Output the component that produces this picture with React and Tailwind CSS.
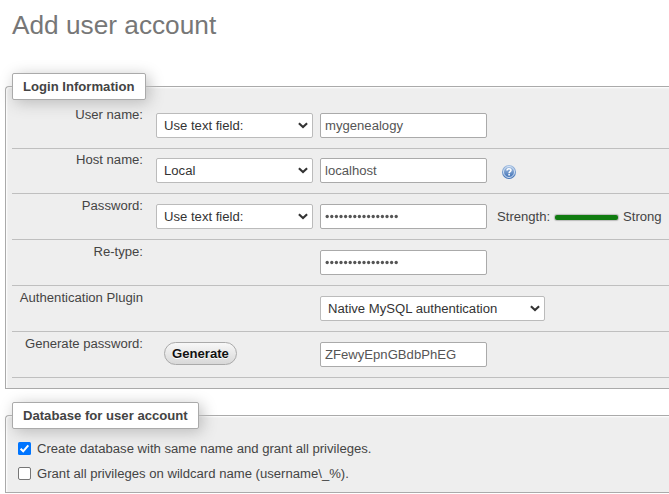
import React from 'react';

function Chevron() {
  return (
    <svg width="10" height="7" viewBox="0 0 10 7" className="shrink-0" fill="none" stroke="#333" strokeWidth="2.1">
      <path d="M0.9 1.2 L5 5 L9.1 1.2" />
    </svg>
  );
}

function Select({ className, children }) {
  return (
    <div className={`flex h-[25px] shrink-0 items-center justify-between rounded-[2px] border border-[#bbb] bg-white pr-[4px] pl-[7px] text-[#333] ${className}`}>
      <span className="whitespace-nowrap">{children}</span>
      <Chevron />
    </div>
  );
}

function Field({ children }) {
  return (
    <div className="ml-[7px] flex h-[25px] w-[167px] shrink-0 items-center rounded-[2px] border border-[#aaa] bg-white pl-[4px] whitespace-nowrap text-[#555]">
      {children}
    </div>
  );
}

function Dots() {
  return (
    <svg width="74" height="5" viewBox="0 0 74 5" fill="#555">
      {Array.from({ length: 16 }, (_, i) => (
        <circle key={i} cx={2.2 + i * 4.6} cy="2.5" r="1.65" />
      ))}
    </svg>
  );
}

function HelpIcon() {
  return (
    <svg width="14" height="14" viewBox="0 0 14 14" className="mb-[4px] ml-[15px] shrink-0">
      <defs>
        <linearGradient id="help" x1="0" y1="0" x2="0" y2="1">
          <stop offset="0" stopColor="#a5c0e2" />
          <stop offset="1" stopColor="#3f70b5" />
        </linearGradient>
      </defs>
      <circle cx="7" cy="7" r="7" fill="url(#help)" />
      <circle cx="7" cy="7" r="5.5" fill="url(#help)" stroke="#dce9f7" strokeWidth="0.9" />
      <path d="M5 5.4 C5 3.1 9 3.1 9 5.3 C9 6.7 7.1 6.6 7.1 8.2" fill="none" stroke="#fff" strokeWidth="1.5" />
      <rect x="6.3" y="9" width="1.6" height="1.5" fill="#fff" />
    </svg>
  );
}

function Row({ label, height = 'h-[46px]', children }) {
  return (
    <div className={`flex items-end border-b border-[#bfbfbf] pb-[10px] ${height}`}>
      <div className="mr-[13px] mb-[15px] flex w-[131px] shrink-0 justify-end leading-4 whitespace-nowrap">{label}</div>
      {children}
    </div>
  );
}

function Panel({ title, legend, className, children }) {
  return (
    <section className={`ml-[5px] rounded-tl-[4px] border border-r-0 border-[#aaa] bg-[#eee] pl-[6px] shadow-[inset_1px_1px_2px_#fff] ${className}`}>
      <h2 className={`-mt-[14px] flex h-[27px] items-center rounded-[2px] border border-[#aaa] bg-white pl-[10px] font-bold whitespace-nowrap shadow-[3px_3px_15px_#bbb] ${legend}`}>
        {title}
      </h2>
      {children}
    </section>
  );
}

function Check({ checked, children }) {
  return (
    <div className="flex h-[25px] items-center pl-[6px]">
      {checked ? (
        <svg width="13" height="13" viewBox="0 0 13 13">
          <rect width="13" height="13" rx="1.5" fill="#0075ff" />
          <path d="M2.6 6.8 L5.2 9.3 L10.3 3.3" fill="none" stroke="#fff" strokeWidth="2" />
        </svg>
      ) : (
        <span className="size-[13px] rounded-[2px] border border-[#767676] bg-white" />
      )}
      <span className="ml-[6px] whitespace-nowrap">{children}</span>
    </div>
  );
}

export default function App() {
  return (
    <main className="h-[494px] w-[669px] overflow-hidden bg-white font-['Liberation_Sans',Arial,sans-serif] text-[13.12px] text-[#444]">
      <h1 className="flex h-[86px] pt-[10px] pl-[12px] text-[26.24px] leading-[30px] text-[#777]">Add user account</h1>
      <Panel title="Login Information" legend="w-[134px]" className="h-[303px]">
        <Row label="User name:" height="h-[49px]">
          <Select className="w-[157px]">Use text field:</Select>
          <Field>mygenealogy</Field>
        </Row>
        <Row label="Host name:" height="h-[45px]">
          <Select className="w-[157px]">Local</Select>
          <Field>localhost</Field>
          <HelpIcon />
        </Row>
        <Row label="Password:">
          <Select className="w-[157px]">Use text field:</Select>
          <Field><Dots /></Field>
          <div className="ml-[10px] flex h-[25px] items-center whitespace-nowrap">
            <span className="w-[58px]">Strength:</span>
            <span className="mt-[2px] mr-[5px] h-[5px] w-[63px] rounded-[2px] bg-[#107c10] shadow-[0_0_1px_1px_#bbb]" />
            <span>Strong</span>
          </div>
        </Row>
        <Row label="Re-type:">
          <div className="w-[157px] shrink-0" />
          <Field><Dots /></Field>
        </Row>
        <Row label="Authentication Plugin">
          <Select className="ml-[164px] w-[225px]">Native MySQL authentication</Select>
        </Row>
        <Row label="Generate password:">
          <div className="flex h-[25px] w-[157px] shrink-0 items-start pl-[8px]">
            <button className="flex h-[23px] w-[73px] items-center justify-center rounded-[12px] border border-[#aaa] bg-linear-to-b from-[#f8f8f8] to-[#d8d8d8] font-bold text-[#111] [text-shadow:0_1px_0_#fff]">Generate</button>
          </div>
          <Field>ZFewyEpnGBdbPhEG</Field>
        </Row>
      </Panel>
      <Panel title="Database for user account" legend="mb-[7px] w-[187px]" className="mt-[26px] h-[78px]">
        <Check checked>Create database with same name and grant all privileges.</Check>
        <Check>Grant all privileges on wildcard name (username\_%).</Check>
      </Panel>
    </main>
  );
}
